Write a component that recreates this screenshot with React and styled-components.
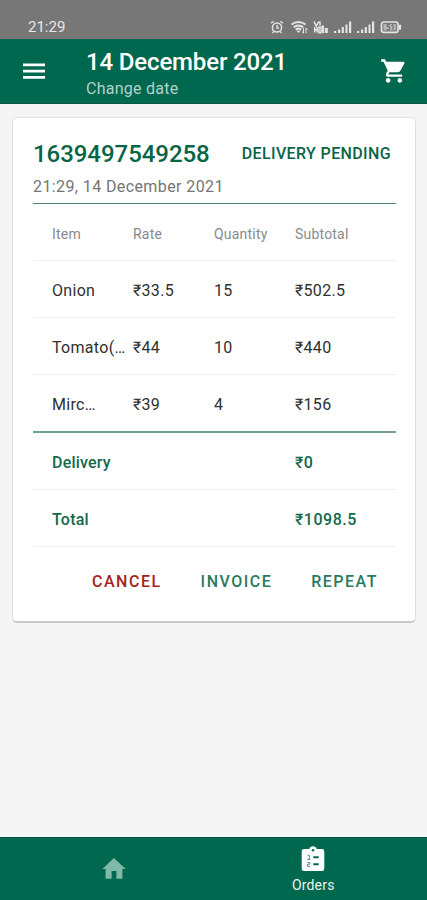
import styled, { createGlobalStyle } from "styled-components";
import { MdShoppingCart } from "react-icons/md";

const order = {
  id: "1639497549258",
  status: "DELIVERY PENDING",
  time: "21:29, 14 December 2021",
  items: [
    { name: "Onion", rate: "₹33.5", quantity: "15", subtotal: "₹502.5" },
    { name: "Tomato(…", rate: "₹44", quantity: "10", subtotal: "₹440" },
    { name: "Mirc…", rate: "₹39", quantity: "4", subtotal: "₹156" },
  ],
  delivery: "₹0",
  total: "₹1098.5",
};

const StatusIcons = () => (
  <svg width="132" height="14" viewBox="0 0 132 14" fill="none" stroke="#e4e4e4">
    {/* alarm */}
    <circle cx="7" cy="7.5" r="4.6" strokeWidth="1.5" />
    <path d="M7 5v3h2M1 3.3 3.6 1.2M13 3.3 10.4 1.2M3.6 11.5 2.4 13M10.4 11.5l1.2 1.5" strokeWidth="1.3" />
    {/* wifi */}
    <path d="M21.5 4.5Q28.5-.5 35.5 4.5M23.7 7.2q4.8-3.6 9.6 0M25.8 9.6q2.7-2 5.4 0" strokeWidth="2" />
    <path d="m28.5 13-2-2.4h4z" fill="#e4e4e4" stroke="none" />
    <path d="M33.5 8v5M31.8 11.5l1.7 1.7M36 13V8M36 8l1.4 1.6" strokeWidth="1" />
    {/* volte */}
    <path d="m44 1.5 2.2 4.6 2.6-4.6M44.7 7v5.6M47.2 7.2v5.4M44 9.8h4M50 1.5v4M49 7v5.8h2V7z" strokeWidth="1.5" />
    <path d="M52 5.5h2V13h-2zM54.8 8h3v5h-3z" fill="#e4e4e4" stroke="none" />
    {/* signal */}
    <path
      d="M64 11h2.2v2H64zM68 9.6h2.2V13H68zM71.7 7h2.2v6h-2.2zM75.5 4.4h2V13h-2zM79 1.5h2.2V13H79zM87 11h2.2v2H87zM91 9.6h2.2V13H91zM94.7 7h2.2v6h-2.2zM98.5 4.4h2V13h-2zM102 1.5h2.2V13H102z"
      fill="#e4e4e4"
      stroke="none"
    />
    {/* battery */}
    <rect x="111.5" y="2" width="16.5" height="10.4" rx="2.4" strokeWidth="1.7" />
    <path d="M130 4.8v4.8" strokeWidth="2.2" />
    <rect x="113.5" y="4" width="12.4" height="6.4" fill="#b5b5b5" stroke="none" />
    <path d="M120 4.6h-3v2h2.6v3h-2.8M121.5 5.5l1.5-1v5.6" stroke="#666" strokeWidth="1" />
  </svg>
);

const MenuIcon = () => (
  <svg width="22" height="16" viewBox="0 0 22 16">
    <path d="M0 .5h22v2.7H0zM0 6.8h22v2.7H0zM0 13h22v2.7H0z" fill="#fff" />
  </svg>
);

const HomeIcon = () => (
  <svg width="24" height="22" viewBox="0 0 24 22">
    <path d="M12 0 23.7 11H20.4v9.8h-6V13H9.6v7.8h-6V11H.3z" fill="#7fb9a7" />
  </svg>
);

const OrdersIcon = () => (
  <svg width="24" height="26" viewBox="0 0 24 26">
    <path d="M3 3h5.2a4 4 0 0 1 7.6 0H21a2.3 2.3 0 0 1 2.3 2.3v17.4A2.3 2.3 0 0 1 21 25H3A2.3 2.3 0 0 1 .7 22.7V5.3A2.3 2.3 0 0 1 3 3z" fill="#fff" />
    <circle cx="12" cy="4.2" r="1.2" fill="#00684e" />
    <path d="M12.3 10.2h5.4v2h-5.4zM12.3 17.3h5.4v2h-5.4z" fill="#00684e" />
    <path d="M6.5 9.2h1.8v4.2M6.3 13.5h3M6.4 16.4h2.4v1.8H6.6v2.2h2.7" fill="none" stroke="#4b9381" strokeWidth="1" />
  </svg>
);

const App = () => {
  return (
    <>
      <GlobalStyle />
      <Screen>
        <StatusBar>
          <span>21:29</span>
          <StatusIcons />
        </StatusBar>
        <Header>
          <MenuIcon />
          <HeaderText>
            <Title>14 December 2021</Title>
            <Subtitle>Change date</Subtitle>
          </HeaderText>
          <MdShoppingCart size={28} />
        </Header>
        <Main>
          <Card>
            <CardTop>
              <OrderId>{order.id}</OrderId>
              <OrderStatus>{order.status}</OrderStatus>
            </CardTop>
            <OrderTime>{order.time}</OrderTime>
            <Table>
              <HeadRow>
                <span>Item</span>
                <span>Rate</span>
                <span>Quantity</span>
                <span>Subtotal</span>
              </HeadRow>
              {order.items.map((item, i) => (
                <Row key={item.name} $strong={i === order.items.length - 1}>
                  <span>{item.name}</span>
                  <span>{item.rate}</span>
                  <span>{item.quantity}</span>
                  <span>{item.subtotal}</span>
                </Row>
              ))}
              <SumRow>
                <span>Delivery</span>
                <SumValue>{order.delivery}</SumValue>
              </SumRow>
              <SumRow>
                <span>Total</span>
                <SumValue>{order.total}</SumValue>
              </SumRow>
            </Table>
            <Actions>
              <Action $color="#a5231c">CANCEL</Action>
              <Action>INVOICE</Action>
              <Action>REPEAT</Action>
            </Actions>
          </Card>
        </Main>
        <BottomNav>
          <Tab>
            <HomeIcon />
          </Tab>
          <Tab $active>
            <OrdersIcon />
            <TabLabel>Orders</TabLabel>
          </Tab>
        </BottomNav>
      </Screen>
    </>
  );
};
export default App;

const GlobalStyle = createGlobalStyle`
  * {
    box-sizing: border-box;
  }

  body {
    margin: 0;
    font-family: Roboto, sans-serif;
  }
`;

const Screen = styled.div`
  display: flex;
  flex-direction: column;
  height: 900px;
  background: #f5f5f5;
  overflow: hidden;
`;

const StatusBar = styled.div`
  display: flex;
  flex: none;
  justify-content: space-between;
  align-items: center;
  height: 39px;
  padding: 14px 25px 0 28px;
  background: #777777;
  color: #e6e6e6;
  font-size: 15px;
  line-height: 16px;
`;

const Header = styled.header`
  display: flex;
  flex: none;
  align-items: center;
  height: 65px;
  padding: 0 19px 0 23px;
  background: #00684e;
  border-bottom: 1px solid #00583f;
  color: #fff;
`;

const HeaderText = styled.div`
  flex: 1;
  padding: 6px 0 0 41px;
`;

const Title = styled.div`
  font-size: 24px;
  font-weight: 500;
  line-height: 28px;
  letter-spacing: -0.15px;
`;

const Subtitle = styled.div`
  color: #b2d2ca;
  font-size: 16px;
  line-height: 25px;
  letter-spacing: 0.25px;
`;

const Main = styled.main`
  flex: 1;
  padding: 13px 11px 0 12px;
`;

const Card = styled.section`
  height: 506px;
  padding: 21px 19px 0 20px;
  background: #fff;
  border: 1px solid #dedede;
  border-bottom: 2px solid #c8c8c8;
  border-radius: 5px;
`;

const CardTop = styled.div`
  display: flex;
  justify-content: space-between;
  align-items: center;
  height: 30px;
  padding-right: 5px;
  color: #0a6546;
  font-weight: 500;
`;

const OrderId = styled.div`
  font-size: 24px;
  letter-spacing: -0.05px;
`;

const OrderStatus = styled.div`
  padding-bottom: 2px;
  font-size: 16px;
  letter-spacing: 0.37px;
`;

const OrderTime = styled.div`
  height: 35px;
  border-bottom: 1px solid #4c8672;
  color: #757575;
  font-size: 16px;
  line-height: 35px;
  letter-spacing: 0.4px;
`;

const Table = styled.div`
  display: flex;
  flex-direction: column;
`;

const Row = styled.div`
  display: grid;
  grid-template-columns: repeat(4, 81px);
  align-items: center;
  height: ${(props) => (props.$strong ? "58px" : "57px")};
  padding: 4px 0 0 19px;
  border-bottom: ${(props) => (props.$strong ? "2px solid #72a090" : "1px solid #efefef")};
  color: #303030;
  font-size: 16px;
  line-height: 20px;
  letter-spacing: 0.3px;
  white-space: nowrap;
`;

const HeadRow = styled(Row)`
  color: #8a8a8a;
  font-size: 14px;
  letter-spacing: 0.2px;
`;

const SumRow = styled(Row)`
  color: #12694b;
  font-weight: 500;
  letter-spacing: 0.2px;
`;

const SumValue = styled.span`
  grid-column: 4;
  letter-spacing: 0.5px;
`;

const Actions = styled.div`
  display: flex;
  justify-content: flex-end;
  gap: 39px;
  padding: 25px 18px 0 0;
`;

const Action = styled.button`
  padding: 0;
  border: 0;
  background: none;
  color: ${(props) => props.$color || "#2b7a5f"};
  font-family: inherit;
  font-size: 16px;
  font-weight: 500;
  line-height: 20px;
  letter-spacing: 1.5px;
`;

const BottomNav = styled.nav`
  display: flex;
  flex: none;
  height: 63px;
  padding: 0 14px;
  background: #00684e;
  border-top: 1px solid #00503a;
`;

const Tab = styled.div`
  display: flex;
  flex: 1;
  flex-direction: column;
  align-items: center;
  justify-content: center;
  padding-top: ${(props) => (props.$active ? "2px" : "0")};
`;

const TabLabel = styled.div`
  padding-top: 4px;
  color: #e9f4f0;
  font-size: 14px;
  line-height: 18px;
  letter-spacing: 0.2px;
`;
